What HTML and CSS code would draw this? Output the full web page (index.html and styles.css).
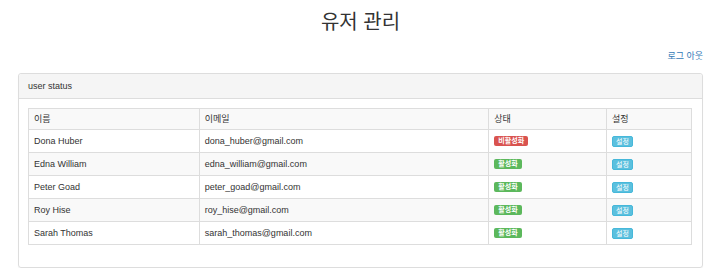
FILE: index.html
```html
<!DOCTYPE html>
<html lang="ko">
<head>
  <meta charset="UTF-8" />
  <meta name="viewport" content="width=device-width, initial-scale=1.0" />
  <title>유저 관리</title>
  <link rel="stylesheet" href="styles.css">
</head>
<body>
  <div class="container">
    <h1 class="title">유저 관리</h1>
    <div class="top-links">
      <a href="#" class="logout">로그 아웃</a>
    </div>

    <div class="panel">
      <div class="panel-heading">user status</div>
      <div class="panel-body">
        <table class="user-table">
          <colgroup>
            <col class="col-name">
            <col class="col-email">
            <col class="col-state">
            <col class="col-setting">
          </colgroup>
          <tbody>
            <tr>
              <td>이름</td>
              <td>이메일</td>
              <td>상태</td>
              <td>설정</td>
            </tr>
            <tr>
              <td>Dona Huber</td>
              <td>dona_huber@gmail.com</td>
              <td><span class="label label-danger">비활성화</span></td>
              <td><button class="btn-set">설정</button></td>
            </tr>
            <tr>
              <td>Edna William</td>
              <td>edna_william@gmail.com</td>
              <td><span class="label label-success">활성화</span></td>
              <td><button class="btn-set">설정</button></td>
            </tr>
            <tr>
              <td>Peter Goad</td>
              <td>peter_goad@gmail.com</td>
              <td><span class="label label-success">활성화</span></td>
              <td><button class="btn-set">설정</button></td>
            </tr>
            <tr>
              <td>Roy Hise</td>
              <td>roy_hise@gmail.com</td>
              <td><span class="label label-success">활성화</span></td>
              <td><button class="btn-set">설정</button></td>
            </tr>
            <tr>
              <td>Sarah Thomas</td>
              <td>sarah_thomas@gmail.com</td>
              <td><span class="label label-success">활성화</span></td>
              <td><button class="btn-set">설정</button></td>
            </tr>
          </tbody>
        </table>
      </div>
    </div>
  </div>
</body>
</html>
```

FILE: styles.css
```css
:root {
  --border: #dddddd;
  --text: #333333;
  --link: #337ab7;
  --font: 'Liberation Sans', 'Noto Sans CJK KR', sans-serif;
}

body, html {
  margin: 0;
  padding: 0;
  font-family: var(--font);
  font-size: 9px;
  line-height: 1.43;
  color: var(--text);
  background: #fff;
}

.container {
  padding: 0 17px 0 18px;
}

.title {
  margin: 0;
  padding-top: 8px;
  height: 30px;
  text-align: center;
  font-family: var(--font);
  font-size: 20px;
  font-weight: 400;
  line-height: 28px;
}

.top-links {
  display: flex;
  justify-content: flex-end;
  height: 35px;
  align-items: flex-start;
  padding-top: 12px;
  box-sizing: border-box;
}

.logout {
  color: var(--link);
  text-decoration: none;
  font-size: 9px;
  line-height: 12px;
}

.panel {
  border: 1px solid var(--border);
  border-radius: 3px;
  box-shadow: 0 1px 1px rgba(0, 0, 0, 0.05);
}

.panel-heading {
  background-color: #f5f5f5;
  border-bottom: 1px solid var(--border);
  border-radius: 3px 3px 0 0;
  height: 24px;
  line-height: 24px;
  padding: 0 9px;
}

.panel-body {
  padding: 9px 10px 9px 9px;
}

.user-table {
  width: 100%;
  border-collapse: collapse;
  margin-bottom: 13px;
  line-height: 11px;
}

.col-name { width: 171px; }
.col-email { width: 290px; }
.col-state { width: 118px; }
.col-setting { width: 85px; }

.user-table td {
  border: 1px solid var(--border);
  padding: 6px 5px 5px;
  height: 11px;
  vertical-align: top;
}

.user-table tr:nth-of-type(odd) {
  background-color: #f9f9f9;
}

.user-table tr:first-child td {
  padding: 5px 5px 4px;
}

.label {
  display: inline-block;
  font-size: 7px;
  font-weight: bold;
  line-height: 8px;
  color: #fff;
  padding: 1px 4px 1px;
  border-radius: 2px;
  vertical-align: top;
}

.label-danger {
  background-color: #d9534f;
}

.label-success {
  background-color: #5cb85c;
}

.btn-set {
  display: inline-block;
  font-family: var(--font);
  font-size: 7px;
  line-height: 9px;
  color: #fff;
  background-color: #5bc0de;
  border: 1px solid #46b8da;
  border-radius: 2px;
  padding: 0 3px;
  margin: 0;
  vertical-align: top;
  cursor: pointer;
}
```
